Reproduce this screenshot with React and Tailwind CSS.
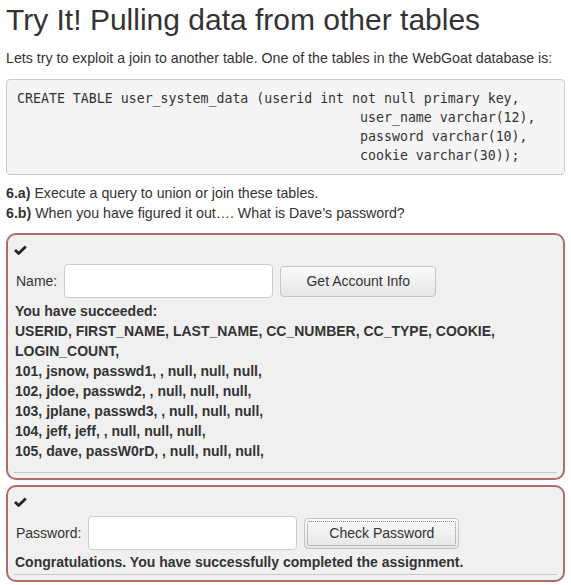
import { useState } from 'react';

const rows = [
  'USERID, FIRST_NAME, LAST_NAME, CC_NUMBER, CC_TYPE, COOKIE, LOGIN_COUNT,',
  '101, jsnow, passwd1, , null, null, null,',
  '102, jdoe, passwd2, , null, null, null,',
  '103, jplane, passwd3, , null, null, null,',
  '104, jeff, jeff, , null, null, null,',
  '105, dave, passW0rD, , null, null, null,',
];

const pad = ' '.repeat(43);
const sql = `CREATE TABLE user_system_data (userid int not null primary key,
${pad}user_name varchar(12),
${pad}password varchar(10),
${pad}cookie varchar(30));`;

function Check() {
  return (
    <svg width="13" height="10" viewBox="0 0 13 10" className="block">
      <path d="M1 5 L4.6 8.4 L11.8 1.4" fill="none" stroke="#222" strokeWidth="2.8" strokeLinejoin="miter" />
    </svg>
  );
}

function Panel({ children, hrGap }) {
  return (
    <div className="bg-[#f0f0f0] border-2 border-[#b06b6b] rounded-[10px] px-[6px] pt-[10px] pb-[5px]">
      <Check />
      {children}
      <div className={`h-px bg-[#c8c8c8] ${hrGap}`} />
    </div>
  );
}

export default function App() {
  const [name, setName] = useState('');
  const [pwd, setPwd] = useState('');

  return (
    <div className="px-[6px] text-[#333] text-[14px] leading-[20px] font-['Liberation_Sans',Arial,sans-serif] bg-white min-h-[585px]">
      <h1 className="text-[30px] leading-[36px] pt-[2px] m-0 font-normal">Try It! Pulling data from other tables</h1>
      <p className="mt-[10px] mb-[11px] text-[14.2px]">Lets try to exploit a join to another table. One of the tables in the WebGoat database is:</p>
      <pre className="bg-[#f5f5f5] border border-[#ccc] rounded-[4px] px-[10px] py-[9px] text-[13.25px] leading-[19px] font-['DejaVu_Sans_Mono','Liberation_Mono',monospace] text-[#333] whitespace-pre">{sql}</pre>
      <div className="mt-[8px] text-[14.2px]">
        <div><b>6.a)</b> Execute a query to union or join these tables.</div>
        <div><b>6.b)</b> When you have figured it out…. What is Dave’s password?</div>
      </div>

      <div className="mt-[10px]">
        <Panel hrGap="mt-[11px]">
          <div className="flex items-center mt-[9px] pl-[2px]">
            <label className="mr-[7px]">Name:</label>
            <input value={name} onChange={(e) => setName(e.target.value)} className="w-[209px] h-[34px] bg-white border border-[#ccc] rounded-[4px] px-2 outline-none" />
            <button className="ml-[7px] w-[156px] h-[31px] rounded-[4px] border border-[#c4c4c4] bg-gradient-to-b from-[#fafafa] to-[#e6e6e6] text-[#333]">Get Account Info</button>
          </div>
          <div className="font-bold mt-[3px] pl-[1px]">
            <div>You have succeeded:</div>
            {rows.map((r, i) => <div key={i}>{r}</div>)}
          </div>
        </Panel>
      </div>

      <div className="mt-[5px]">
        <Panel hrGap="mt-[2px]">
          <div className="flex items-center mt-[9px] pl-[2px]">
            <label className="mr-[7px]">Password:</label>
            <input type="password" value={pwd} onChange={(e) => setPwd(e.target.value)} className="w-[209px] h-[34px] bg-white border border-[#ccc] rounded-[4px] px-2 outline-none" />
            <button className="ml-[7px] w-[155px] h-[31px] rounded-[4px] border border-[#c4c4c4] bg-gradient-to-b from-[#fafafa] to-[#e6e6e6] text-[#333] p-[2px]">
              <span className="block h-full border border-dotted border-[#888] rounded-[2px] leading-[23px]">Check Password</span>
            </button>
          </div>
          <div className="font-bold mt-[2px] pl-[1px]">Congratulations. You have successfully completed the assignment.</div>
        </Panel>
      </div>
    </div>
  );
}
